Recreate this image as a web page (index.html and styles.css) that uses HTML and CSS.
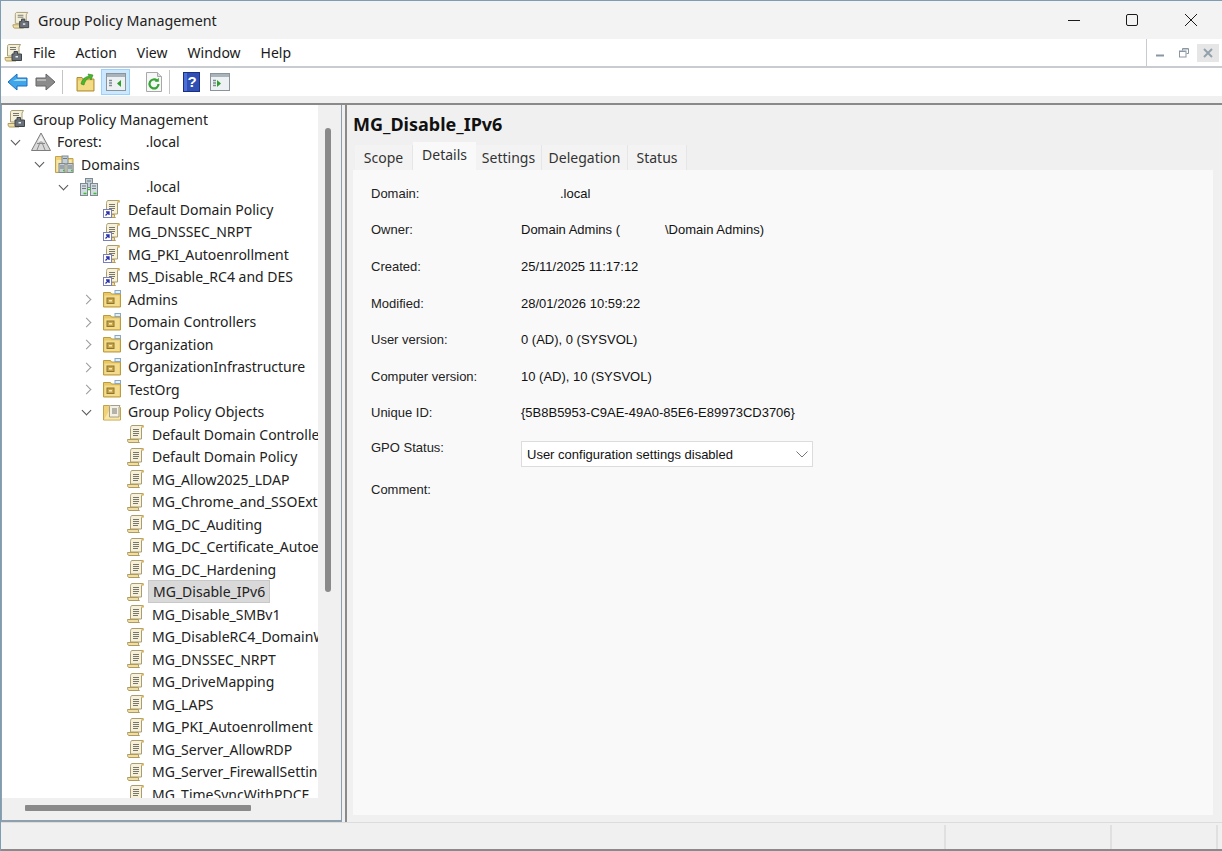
FILE: index.html

```html
<!DOCTYPE html>
<html lang="en">
<head>
    <meta charset="UTF-8">
    <title>Group Policy Management</title>
    <link rel="stylesheet" href="styles.css">
</head>
<body>
    <!-- Icon sheet -->
    <svg class="icon-sheet" xmlns="http://www.w3.org/2000/svg">
        <symbol id="scroll" viewBox="0 0 20 20">
            <path d="M6 1.5h11l-1.5 2.5v11H4.500V4.500C4.500 3 5 1.500 6 1.500z" fill="#f6f1d8" stroke="#a99d72"/>
            <path d="M1.500 15.500h11v1.500c0 1 .5 1.500 1 1.500H3c-1 0-1.500-1-1.500-3z" fill="#efdfa6" stroke="#b09a5c"/>
            <path d="M7 5.500h6M7 7.500h6M7 9.500h6M7 11.500h5" stroke="#77776e" fill="none"/>
            <path d="M15.500 2.500h2.500" stroke="#d9b75f" stroke-width="2"/>
        </symbol>
        <symbol id="scroll-link" viewBox="0 0 20 20">
            <use href="#scroll"/>
            <rect x="1.500" y="10.500" width="8" height="8" fill="#fff" stroke="#7a7fb8"/>
            <path d="M3.500 16.500l3-3M4 13h3v3" stroke="#2a2fa8" stroke-width="1.300" fill="none"/>
        </symbol>
        <symbol id="ou" viewBox="0 0 20 20">
            <path d="M1.500 3.500h7l1 1.500h9v13h-17z" fill="#e8c766" stroke="#bd9a3e"/>
            <path d="M2.500 6.500h15v10.500h-15z" fill="#f3dc8d"/>
            <rect x="5" y="9" width="7" height="5.500" fill="#c9a545" stroke="#8d7430"/>
            <rect x="7" y="11" width="3" height="1.500" fill="#f6e9b5"/>
            <rect x="13" y="1.500" width="5.500" height="3" fill="#e7f0f8" stroke="#88a9c6"/>
        </symbol>
        <symbol id="folder-gpo" viewBox="0 0 20 20">
            <path d="M1.500 3.500h6l1.500 2h9.500v12.500h-17z" fill="#f0d27a" stroke="#c4a24a"/>
            <path d="M9 5.500h9v12H2z" fill="#f8e7a6"/>
            <path d="M9 3.500h9l-1 2v9.500H7.500V5C7.500 4 8 3.500 9 3.500z" fill="#f4f1e4" stroke="#a3a08c"/>
            <path d="M10 7h5M10 9h5M10 11h5" stroke="#77776e"/>
        </symbol>
        <symbol id="folder-servers" viewBox="0 0 20 20">
            <path d="M.5 2.500h6l1.500 2h10v14H.5z" fill="#f0d27a" stroke="#c4a24a"/>
            <path d="M1.500 6h15v11.500h-15z" fill="#f8e7a6"/>
            <rect x="7" y="2" width="6" height="8" fill="#c4ced5" stroke="#7e8a92"/>
            <rect x="4" y="9.500" width="6" height="9" fill="#c4ced5" stroke="#7e8a92"/>
            <rect x="12" y="9.500" width="6" height="9" fill="#c4ced5" stroke="#7e8a92"/>
            <path d="M5 12h4M5 14h4M13 12h4M13 14h4M8 4.500h4" stroke="#6f7a82"/>
            <path d="M8 16.500h1.500M16 16.500h1.500" stroke="#35c22f" stroke-width="1.500"/>
        </symbol>
        <symbol id="domain" viewBox="0 0 20 20">
            <rect x="6.500" y="1.500" width="7" height="9" fill="#c4ced5" stroke="#7e8a92"/>
            <rect x="1.500" y="6.500" width="7" height="12" fill="#d3dbe0" stroke="#7e8a92"/>
            <rect x="11.500" y="6.500" width="7" height="12" fill="#d3dbe0" stroke="#7e8a92"/>
            <path d="M8 4h4M3 9h4M3 11.500h4M13 9h4M13 11.500h4" stroke="#6f7a82"/>
            <path d="M4.500 16.500h3M14.500 16.500h3M8.500 12.500h3" stroke="#35c22f" stroke-width="1.500"/>
        </symbol>
        <symbol id="forest" viewBox="0 0 20 20">
            <path d="M10 1L19.500 18.500H.5z" fill="#d9d9d9" stroke="#7d7d7d"/>
            <path d="M10 8L6 18M10 8l4 10M6 11.500h8" stroke="#8a8a8a" fill="none"/>
            <path d="M10 3.500l-3 6h6z" fill="#f3f3f3"/>
        </symbol>
        <symbol id="console" viewBox="0 0 20 20">
            <path d="M5 1.500h11.500l-1.500 2.500v9H3.500V3.500C3.500 2.500 4 1.500 5 1.500z" fill="#f4efd9" stroke="#a99d72"/>
            <path d="M1 14.500h10v1.500c0 1 .5 2 1 2H2.500C1.500 18 1 16 1 14.500z" fill="#efdfa6" stroke="#b09a5c"/>
            <path d="M6 4.500h6M6 6.500h6" stroke="#77776e"/>
            <path d="M10 8.500h3.500v2.500h4v6.500H8V11h2z" fill="#6b7178" stroke="#3f454c"/>
            <rect x="11.500" y="13" width="2.500" height="1.500" fill="#e9edf0"/>
        </symbol>
        <symbol id="pane" viewBox="0 0 20 18">
            <rect x=".5" y=".5" width="19" height="17" fill="#eef1f3" stroke="#8b949b"/>
            <rect x="1" y="1" width="18" height="3" fill="#a9b3ba"/>
            <path d="M3 7.500h3M3 10h3M3 12.500h3" stroke="#7e8a92" stroke-width="1.500"/>
        </symbol>
    </svg>

    <div class="window">
        <div class="titlebar">
            <svg class="ico-title"><use href="#console"/></svg>
            <span class="title-text">Group Policy Management</span>
            <div class="win-controls">
                <span class="win-btn"><svg width="14" height="14" viewBox="0 0 14 14"><path d="M1 7.500h12" stroke="#1a1a1a"/></svg></span>
                <span class="win-btn"><svg width="14" height="14" viewBox="0 0 14 14"><rect x="1.500" y="1.500" width="11" height="11" rx="1.500" fill="none" stroke="#1a1a1a"/></svg></span>
                <span class="win-btn"><svg width="14" height="14" viewBox="0 0 14 14"><path d="M1 1l12 12M13 1L1 13" stroke="#1a1a1a" fill="none"/></svg></span>
            </div>
        </div>

        <div class="menubar">
            <div class="menu-main">
                <svg class="ico-menu"><use href="#console"/></svg>
                <span class="menu-item">File</span>
                <span class="menu-item">Action</span>
                <span class="menu-item">View</span>
                <span class="menu-item">Window</span>
                <span class="menu-item">Help</span>
            </div>
            <div class="mdi-controls">
                <span class="mdi-btn"><svg width="10" height="10" viewBox="0 0 10 10"><path d="M1 7.500h8" stroke="#8a97a3" stroke-width="2"/></svg></span>
                <span class="mdi-btn"><svg width="10" height="10" viewBox="0 0 10 10"><path d="M3.500 2.500V.5h6v5H7.500" stroke="#8a97a3" fill="none"/><rect x=".5" y="3" width="6.500" height="6" fill="none" stroke="#8a97a3"/><path d="M1 3.500h5.500M4 1h5" stroke="#8a97a3"/></svg></span>
                <span class="mdi-btn mdi-close"><svg width="10" height="10" viewBox="0 0 10 10"><path d="M1 1l8 8M9 1L1 9" stroke="#93a1ad" stroke-width="2"/></svg></span>
            </div>
        </div>

        <div class="toolbar">
            <span class="tool tool-nav"><svg width="21" height="18" viewBox="0 0 21 18"><path d="M1 9L10 1v4h10v8H10v4z" fill="#3fa6ea" stroke="#1b6fc0"/><path d="M10 6h9v2H6z" fill="#a6daf8"/></svg></span>
            <span class="tool tool-nav"><svg width="21" height="18" viewBox="0 0 21 18"><path d="M20 9L11 1v4H1v8h10v4z" fill="#8b8b8b" stroke="#666"/><path d="M2 6h9v2H2z" fill="#b5b5b5"/></svg></span>
            <span class="tool-sep"></span>
            <span class="tool tool-up"><svg width="19" height="20" viewBox="0 0 19 20"><path d="M1 5.500h5l1 1.500h11v12H1z" fill="#e9c766" stroke="#b08f36"/><path d="M2 8.500h15v9.500H2z" fill="#f3dc86"/><path d="M5 12c1-5 4-7 8-8l-1-2 5 1-2 5-1-2c-3 0-5 3-6 7z" fill="#4bb52d" stroke="#2e8a1a" stroke-width=".6"/></svg></span>
            <span class="tool tool-active"><svg width="20" height="18"><use href="#pane"/><path d="M15 7v7l-4-3.500z" fill="#2ca02c"/><rect x="3" y="5" width="4" height="10" fill="none"/></svg></span>
            <span class="tool tool-refresh"><svg width="18" height="20" viewBox="0 0 18 20"><path d="M1.500.5h11l4 4v15h-15z" fill="#f7f7f7" stroke="#a8a8a8"/><path d="M12.500.5v4h4" fill="#ddd" stroke="#a8a8a8"/><path d="M13.500 12a4.500 4.500 0 1 1-1.500-3.400" fill="none" stroke="#35a534" stroke-width="2.200"/><path d="M13.800 5.800v4h-4z" fill="#35a534"/></svg></span>
            <span class="tool-sep"></span>
            <span class="tool tool-help"><svg width="17" height="20" viewBox="0 0 17 20"><rect x=".5" y=".5" width="16" height="19" fill="#2f4fb4" stroke="#1b2f82"/><rect x="1" y="1" width="3" height="18" fill="#4a6fd6"/><text class="help-mark" x="9" y="15">?</text></svg></span>
            <span class="tool tool-action"><svg width="20" height="18"><use href="#pane"/><path d="M7 7v7l4-3.500z" fill="#2ca02c"/></svg></span>
        </div>

        <div class="strip"></div>

        <div class="main">
            <div class="left-panel">
                <div class="left-top">
                    <div class="tree">
                        <div class="row"><svg class="ico root"><use href="#console"/></svg>Group Policy Management</div>
                        <div class="row lvl-1"><i class="tw open"></i><svg class="ico"><use href="#forest"/></svg>Forest:<span class="mask-forest">.local</span></div>
                        <div class="row lvl-2"><i class="tw open"></i><svg class="ico"><use href="#folder-servers"/></svg>Domains</div>
                        <div class="row lvl-3"><i class="tw open"></i><svg class="ico"><use href="#domain"/></svg><span class="mask-domain">.local</span></div>
                        <div class="row lvl-4"><svg class="ico"><use href="#scroll-link"/></svg>Default Domain Policy</div>
                        <div class="row lvl-4"><svg class="ico"><use href="#scroll-link"/></svg>MG_DNSSEC_NRPT</div>
                        <div class="row lvl-4"><svg class="ico"><use href="#scroll-link"/></svg>MG_PKI_Autoenrollment</div>
                        <div class="row lvl-4"><svg class="ico"><use href="#scroll-link"/></svg>MS_Disable_RC4 and DES</div>
                        <div class="row lvl-4"><i class="tw closed"></i><svg class="ico"><use href="#ou"/></svg>Admins</div>
                        <div class="row lvl-4"><i class="tw closed"></i><svg class="ico"><use href="#ou"/></svg>Domain Controllers</div>
                        <div class="row lvl-4"><i class="tw closed"></i><svg class="ico"><use href="#ou"/></svg>Organization</div>
                        <div class="row lvl-4"><i class="tw closed"></i><svg class="ico"><use href="#ou"/></svg>OrganizationInfrastructure</div>
                        <div class="row lvl-4"><i class="tw closed"></i><svg class="ico"><use href="#ou"/></svg>TestOrg</div>
                        <div class="row lvl-4"><i class="tw open"></i><svg class="ico"><use href="#folder-gpo"/></svg>Group Policy Objects</div>
                        <div class="row lvl-5"><svg class="ico"><use href="#scroll"/></svg>Default Domain Controllers Policy</div>
                        <div class="row lvl-5"><svg class="ico"><use href="#scroll"/></svg>Default Domain Policy</div>
                        <div class="row lvl-5"><svg class="ico"><use href="#scroll"/></svg>MG_Allow2025_LDAP</div>
                        <div class="row lvl-5"><svg class="ico"><use href="#scroll"/></svg>MG_Chrome_and_SSOExtension</div>
                        <div class="row lvl-5"><svg class="ico"><use href="#scroll"/></svg>MG_DC_Auditing</div>
                        <div class="row lvl-5"><svg class="ico"><use href="#scroll"/></svg>MG_DC_Certificate_Autoenrollment</div>
                        <div class="row lvl-5"><svg class="ico"><use href="#scroll"/></svg>MG_DC_Hardening</div>
                        <div class="row lvl-5"><svg class="ico"><use href="#scroll"/></svg><span class="selected">MG_Disable_IPv6</span></div>
                        <div class="row lvl-5"><svg class="ico"><use href="#scroll"/></svg>MG_Disable_SMBv1</div>
                        <div class="row lvl-5"><svg class="ico"><use href="#scroll"/></svg>MG_DisableRC4_DomainWide</div>
                        <div class="row lvl-5"><svg class="ico"><use href="#scroll"/></svg>MG_DNSSEC_NRPT</div>
                        <div class="row lvl-5"><svg class="ico"><use href="#scroll"/></svg>MG_DriveMapping</div>
                        <div class="row lvl-5"><svg class="ico"><use href="#scroll"/></svg>MG_LAPS</div>
                        <div class="row lvl-5"><svg class="ico"><use href="#scroll"/></svg>MG_PKI_Autoenrollment</div>
                        <div class="row lvl-5"><svg class="ico"><use href="#scroll"/></svg>MG_Server_AllowRDP</div>
                        <div class="row lvl-5"><svg class="ico"><use href="#scroll"/></svg>MG_Server_FirewallSettings</div>
                        <div class="row lvl-5"><svg class="ico"><use href="#scroll"/></svg>MG_TimeSyncWithPDCE</div>
                    </div>
                    <div class="vscroll"><div class="vthumb"></div></div>
                </div>
                <div class="hscroll"><div class="hthumb"></div></div>
            </div>

            <div class="right-panel">
                <h1 class="gpo-title">MG_Disable_IPv6</h1>
                <div class="tabs">
                    <span class="tab tab-scope">Scope</span>
                    <span class="tab tab-details active">Details</span>
                    <span class="tab tab-settings">Settings</span>
                    <span class="tab tab-delegation">Delegation</span>
                    <span class="tab tab-status">Status</span>
                </div>
                <div class="details">
                    <div class="field"><span class="label">Domain:</span><span class="value"><span class="mask-value">.local</span></span></div>
                    <div class="field"><span class="label">Owner:</span><span class="value">Domain Admins (<span class="mask-owner">\Domain Admins)</span></span></div>
                    <div class="field"><span class="label">Created:</span><span class="value">25/11/2025 11:17:12</span></div>
                    <div class="field"><span class="label">Modified:</span><span class="value">28/01/2026 10:59:22</span></div>
                    <div class="field"><span class="label">User version:</span><span class="value">0 (AD), 0 (SYSVOL)</span></div>
                    <div class="field"><span class="label">Computer version:</span><span class="value">10 (AD), 10 (SYSVOL)</span></div>
                    <div class="field"><span class="label">Unique ID:</span><span class="value">{5B8B5953-C9AE-49A0-85E6-E89973CD3706}</span></div>
                    <div class="field field-status">
                        <span class="label">GPO Status:</span>
                        <div class="combo">
                            <span>User configuration settings disabled</span>
                            <svg width="12" height="7" viewBox="0 0 12 7"><path d="M.5.5L6 6 11.500.5" fill="none" stroke="#777"/></svg>
                        </div>
                    </div>
                    <div class="field field-comment"><span class="label">Comment:</span></div>
                </div>
            </div>
        </div>

        <div class="statusbar">
            <span class="status-cell status-main"></span>
            <span class="status-cell status-mid"></span>
            <span class="status-cell status-end"></span>
        </div>
    </div>
</body>
</html>
```

FILE: styles.css

```css
* {
    box-sizing: border-box;
}
html, body {
    margin: 0;
    padding: 0;
    height: 100%;
    overflow: hidden;
}
body {
    font-family: "Noto Sans", sans-serif;
    font-size: 14px;
    color: #1a1a1a;
}
.icon-sheet {
    display: none;
}
.window {
    height: 851px;
    display: flex;
    flex-direction: column;
    background-color: #f0f0f0;
    border-top: 1px solid #7f9cb5;
    border-left: 1px solid #7f9cb5;
}

/* Title bar */
.titlebar {
    height: 38px;
    display: flex;
    align-items: center;
    background-color: #f3f3f3;
    padding-left: 11px;
}
.ico-title {
    width: 19px;
    height: 19px;
}
.title-text {
    margin-left: 7px;
    font-size: 14.3px;
    color: #222;
}
.win-controls {
    margin-left: auto;
    display: flex;
    padding-right: 2px;
}
.win-btn {
    width: 58.5px;
    display: flex;
    justify-content: center;
}

/* Menu */
.menubar {
    height: 29px;
    display: flex;
    background-color: #fff;
}
.menu-main {
    flex: 1;
    display: flex;
    align-items: center;
    padding-left: 3px;
    border-right: 1px solid #c8ccd0;
    border-bottom: 2px solid #c8ccd0;
}
.ico-menu {
    width: 20px;
    height: 20px;
    margin-right: 9px;
}
.menu-item {
    margin-right: 20px;
}
.mdi-controls {
    width: 75px;
    display: flex;
    gap: 2px;
    padding: 5px 1px 4px 2px;
    border-bottom: 2px solid #c8ccd0;
}
.mdi-btn {
    width: 22px;
    display: flex;
    align-items: center;
    justify-content: center;
    background-color: #fff;
}
.mdi-close {
    background-color: #e6e6e6;
}

/* Toolbar */
.toolbar {
    height: 28px;
    display: flex;
    align-items: center;
    background-color: #fff;
    padding-left: 6px;
}
.tool {
    display: flex;
    align-items: center;
    justify-content: center;
}
.tool-nav {
    width: 21px;
    margin-right: 7px;
}
.tool-nav + .tool-sep {
    margin-left: -1px;
}
.tool-sep {
    width: 1px;
    height: 24px;
    background-color: #c4c4c4;
    margin-left: 0;
}
.tool-up {
    width: 19px;
    margin-left: 13px;
    margin-right: 6px;
}
.tool-active {
    width: 29px;
    height: 26px;
    background-color: #cce8ff;
    border: 1px solid #99d1ff;
}
.tool-refresh {
    width: 18px;
    margin-left: 15px;
    margin-right: 6px;
}
.tool-help {
    width: 17px;
    margin-left: 13px;
}
.tool-action {
    width: 20px;
    margin-left: 10px;
}
.help-mark {
    font-family: "Liberation Sans", sans-serif;
    font-size: 15px;
    font-weight: bold;
    fill: #fff;
    text-anchor: middle;
}
.strip {
    height: 9px;
    background-color: #f0f0f0;
    border-bottom: 2px solid #8a8a8a;
}

/* Main area */
.main {
    flex: 1;
    min-height: 0;
    display: flex;
}
.left-panel {
    width: 341px;
    display: flex;
    flex-direction: column;
    border-left: 1px solid #8ea0ae;
    border-right: 1px solid #8ea0ae;
    border-bottom: 2px solid #8ea0ae;
}
.left-top {
    flex: 1;
    min-height: 0;
    display: flex;
}
.tree {
    width: 316px;
    background-color: #fff;
    overflow: hidden;
    padding-top: 3px;
}
.row {
    height: 22.5px;
    display: flex;
    align-items: center;
    white-space: nowrap;
    position: relative;
    padding-left: 5px;
    color: #222;
}
.lvl-1 {
    padding-left: 29px;
}
.lvl-2 {
    padding-left: 53px;
}
.lvl-3 {
    padding-left: 77px;
}
.lvl-4 {
    padding-left: 100px;
}
.lvl-5 {
    padding-left: 124px;
}
.ico {
    width: 20px;
    height: 20px;
    flex: none;
    margin-right: 6px;
}
.tw {
    position: absolute;
    top: 7px;
    width: 7px;
    height: 7px;
    border-right: 1.4px solid #555;
    border-bottom: 1.4px solid #555;
}
.tw.open {
    margin-left: -19px;
    transform: rotate(45deg);
    margin-top: -1px;
}
.tw.closed {
    margin-left: -19px;
    margin-top: 1px;
    border-color: #999;
    transform: rotate(-45deg);
}
.selected {
    background-color: #d9d9d9;
    border: 1px solid #c8c8c8;
    padding: 1px 4px;
    margin-left: -4px;
}
.mask-forest {
    margin-left: 44px;
}
.mask-domain {
    margin-left: 41px;
}
.vscroll {
    flex: 1;
    background-color: #f0f0f0;
    padding: 23px 0 0 7px;
}
.vthumb {
    width: 6px;
    height: 464px;
    background-color: #8a8a8a;
    border-radius: 3px;
}
.hscroll {
    height: 22px;
    background-color: #f0f0f0;
    padding: 7px 0 0 23px;
}
.hthumb {
    width: 226px;
    height: 6px;
    background-color: #8a8a8a;
    border-radius: 1px;
}

/* Details side */
.right-panel {
    flex: 1;
    margin-left: 3px;
    padding: 0 9px 7px 6px;
    display: flex;
    flex-direction: column;
    border-left: 2px solid #8a8a8a;
}
.gpo-title {
    margin: 6px 0 6px 0;
    font-size: 18px;
    line-height: 26px;
    font-weight: bold;
    color: #111;
}
.tabs {
    display: flex;
    align-items: flex-end;
    height: 27px;
    padding-left: 2px;
}
.tab {
    height: 25px;
    display: flex;
    align-items: center;
    justify-content: center;
    border-right: 1px solid #e6e6e6;
    background-color: #f3f3f3;
    color: #333;
}
.tab-scope {
    width: 58px;
}
.tab-details {
    width: 63px;
}
.tab-settings {
    width: 66px;
}
.tab-delegation {
    width: 86px;
}
.tab-status {
    width: 59px;
}
.tab.active {
    height: 28px;
    background-color: #f9f9f9;
    border-right: none;
    padding-bottom: 3px;
}
.details {
    flex: 1;
    background-color: #f9f9f9;
    padding: 5px 0 0 18px;
    font-family: "Liberation Sans", sans-serif;
    font-size: 13px;
}
.field {
    display: flex;
    align-items: center;
    height: 36.600px;
}
.label {
    width: 150px;
    color: #222;
}
.value {
    color: #111;
}
.mask-value {
    margin-left: 39px;
}
.mask-owner {
    margin-left: 45px;
}
.field-status {
    align-items: flex-start;
    padding-top: 9px;
    height: 43px;
}
.combo {
    width: 292px;
    height: 26px;
    margin-top: 1px;
    padding: 0 4px 0 5px;
    display: flex;
    align-items: center;
    justify-content: space-between;
    background-color: #fff;
    border: 1px solid #dcdcdc;
    color: #111;
}
.field-comment {
    height: 30px;
}

/* Status bar */
.statusbar {
    height: 29px;
    display: flex;
    background-color: #f0f0f0;
    border-top: 1px solid #dcdcdc;
    border-bottom: 2px solid #8a8a8a;
}
.status-cell {
    border-right: 2px solid #e0e0e0;
    margin-top: 2px;
}
.status-main {
    width: 945px;
}
.status-mid {
    width: 166px;
}
.status-end {
    width: 106px;
}
```
